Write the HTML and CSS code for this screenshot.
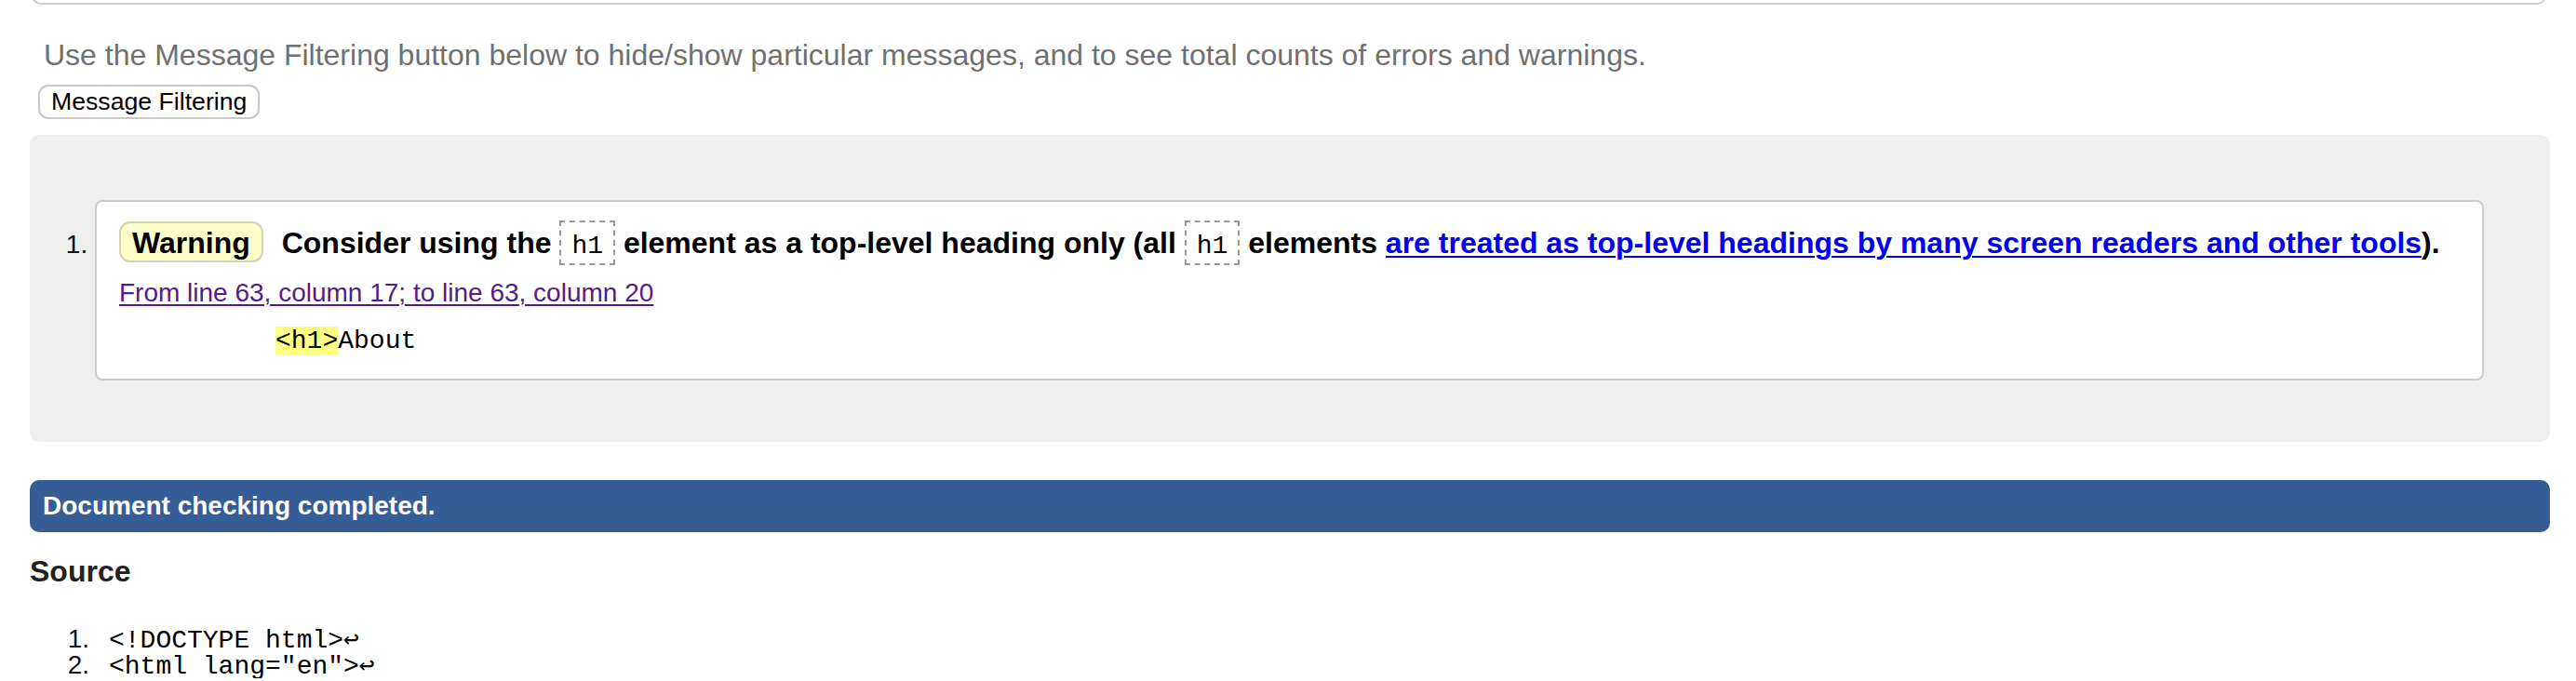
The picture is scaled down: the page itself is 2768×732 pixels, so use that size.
FILE: index.html
```html
<!DOCTYPE html>
<html lang="en">
<head>
<meta charset="utf-8">
<title>Validator results</title>
<link rel="stylesheet" href="styles.css">
</head>
<body>
<div class="topbox"></div>
<p class="intro">Use the Message Filtering button below to hide/show particular messages, and to see total counts of errors and warnings.</p>
<div class="filterbar"><button class="filter-btn" type="button">Message Filtering</button></div>
<ol class="messages">
  <li class="card">
    <p class="msg"><strong class="badge">Warning</strong> Consider using the <code class="tag">h1</code> element as a top-level heading only (all <code class="tag">h1</code> elements <a class="ref" href="#">are treated as top-level headings by many screen readers and other tools</a>).</p>
    <p class="location"><a class="loc" href="#">From line 63, column 17; to line 63, column 20</a></p>
    <p class="extract"><mark class="hl">&lt;h1&gt;</mark>About</p>
  </li>
</ol>
<p class="done">Document checking completed.</p>
<h2 class="source-title">Source</h2>
<ol class="source">
  <li class="src-line"><span class="ln">1.</span><code class="src">&lt;!DOCTYPE html&gt;↩</code></li>
  <li class="src-line"><span class="ln">2.</span><code class="src">&lt;html lang="en"&gt;↩</code></li>
</ol>
</body>
</html>
```
FILE: styles.css
```css
html, body {
  margin: 0;
  padding: 0;
  background: #ffffff;
}
body {
  padding: 0 28px 0 32px;
  font-family: "Liberation Sans", Arial, Helvetica, sans-serif;
  color: #000;
}
.topbox {
  height: 40px;
  margin: -37px 4px 0 2px;
  border: 2px solid #cccccc;
  border-top: none;
  border-radius: 0 0 10px 10px;
}
.intro {
  margin: 36px 0 0 15px;
  font-size: 32px;
  color: #707070;
}
.filterbar {
  display: flex;
  margin: 13px 0 0 9px;
}
.filter-btn {
  font-family: "Liberation Sans", Arial, Helvetica, sans-serif;
  font-size: 26.67px;
  color: #000;
  background: #fff;
  border: 2px solid #c8c8c8;
  border-radius: 11px;
  padding: 1px 12px;
  margin: 0;
}
.messages {
  margin: 17px 0 0 0;
  padding: 70px 71px 66px 70px;
  background: #eeefee;
  border-radius: 10px;
  list-style: decimal;
}
.card {
  background: #fff;
  border: 2px solid #cccccc;
  border-radius: 8px;
  padding: 26px 24px 25px 24px;
  font-size: 28px;
}
.card::marker {
  font-family: "Liberation Sans", Arial, sans-serif;
  font-size: 28px;
  color: #111;
}
.msg {
  margin: 0;
  font-size: 32px;
  font-weight: bold;
}
.badge {
  display: inline;
  background: #ffffcc;
  border: 2px solid #d2d2b4;
  border-radius: 12px;
  padding: 3px 12px 1px 12px;
  margin-right: 11px;
}
.tag {
  font-family: "Liberation Mono", "Courier New", monospace;
  font-size: 28px;
  font-weight: normal;
  border: 2px dashed #999999;
  padding: 10px 11px 3px 11px;
}
.ref {
  color: #0000ee;
  text-decoration: underline;
  text-decoration-thickness: 2px;
  text-underline-offset: 3px;
}
.location {
  margin: 19px 0 0 0;
  font-size: 28px;
}
.loc {
  color: #551a8b;
  text-decoration: underline;
  text-decoration-thickness: 2px;
  text-underline-offset: 3px;
}
.extract {
  margin: 20px 0 0 0;
  padding-left: 168px;
  font-family: "Liberation Mono", "Courier New", monospace;
  font-size: 28px;
}
.hl {
  background: #ffff80;
  color: #000;
}
.done {
  margin: 41px 0 0 0;
  background: #365d95;
  color: #fff;
  font-size: 28px;
  font-weight: bold;
  padding: 12px 14px;
  border-radius: 10px;
}
.source-title {
  margin: 24px 0 0 0;
  font-size: 32px;
  font-weight: bold;
  color: #222;
}
.source {
  list-style: none;
  margin: 40px 0 0 0;
  padding: 0;
}
.src-line {
  display: flex;
  align-items: baseline;
  height: 28px;
}
.ln {
  width: 64px;
  text-align: right;
  font-size: 28px;
  line-height: 28px;
  color: #111;
}
.src {
  margin-left: 21px;
  font-family: "Liberation Mono", "Courier New", monospace;
  font-size: 28px;
  line-height: 28px;
}
```
